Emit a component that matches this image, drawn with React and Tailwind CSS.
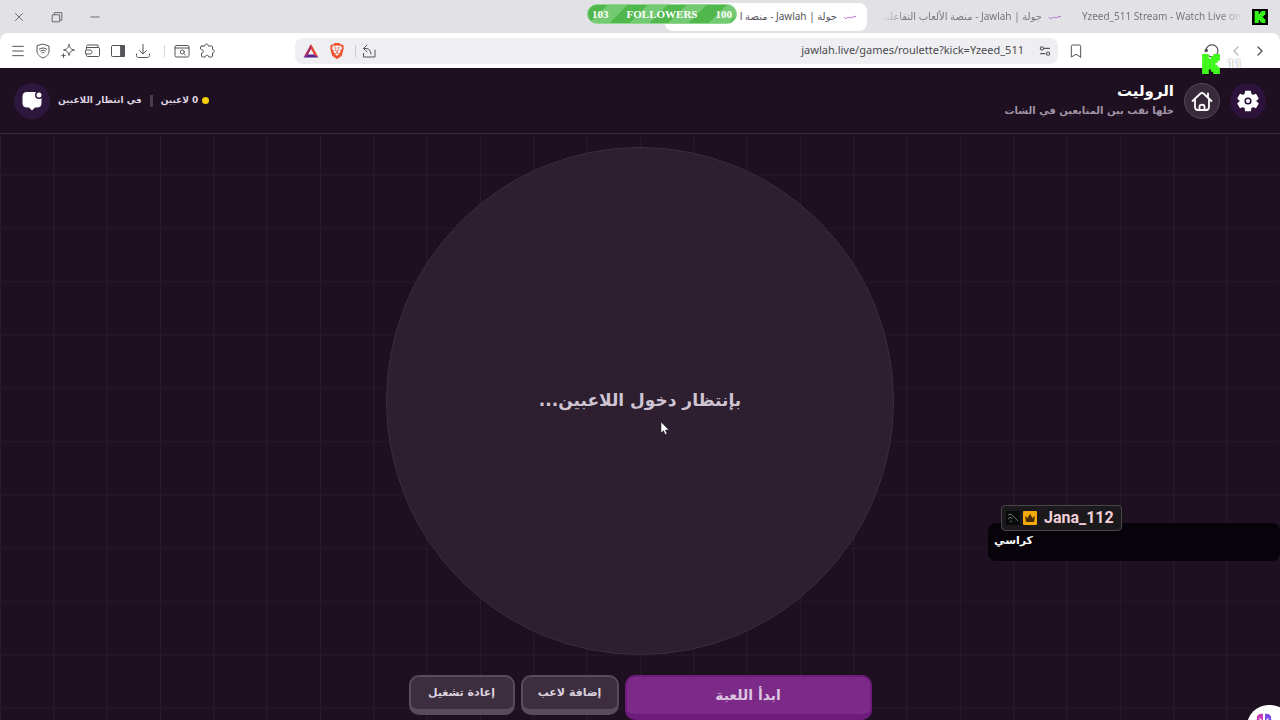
import React from 'react';
import { Menu, Bookmark, ChevronLeft, ChevronRight, X, Minus } from 'lucide-react';
import { SiKick, SiBrave } from 'react-icons/si';

const svgProps = {
  viewBox: '0 0 16 16',
  fill: 'none',
  stroke: 'currentColor',
  strokeWidth: 1,
  strokeLinecap: 'round',
  strokeLinejoin: 'round',
  className: 'w-4 h-4',
  'aria-hidden': true,
};

const ShieldIcon = () => (
  <svg {...svgProps}>
    <path d="M8 1.200 14 3v5c0 3.400-2.600 5.700-6 7-3.400-1.300-6-3.600-6-7V3z" />
    <path d="M4.300 6.200c2.200-1.700 5.200-1.700 7.400 0M5.500 8c1.500-1.100 3.500-1.100 5 0M6.800 9.700c.8-.5 1.600-.5 2.400 0" />
  </svg>
);

const SparkIcon = () => (
  <svg {...svgProps}>
    <path d="M9 1.500c.8 3.700 1.700 4.700 5.500 5.500-3.800.8-4.700 1.800-5.500 5.500C8.200 8.800 7.300 7.800 3.500 7 7.300 6.200 8.200 5.200 9 1.500z" />
    <path d="M3.500 10.800v3.600M1.700 12.600h3.600" />
  </svg>
);

const WalletIcon = () => (
  <svg {...svgProps}>
    <path d="M1.500 6V3.500C1.500 2.500 2.300 2 3 2h10v2.500M1.500 4.500h12c.6 0 1 .4 1 1v7c0 .6-.4 1-1 1h-11c-.6 0-1-.4-1-1v-1" />
    <path d="M1 7h4c2.700 0 2.700 4 0 4H1z" />
  </svg>
);

const PanelIcon = () => (
  <svg {...svgProps}>
    <rect x="1.500" y="2.500" width="13" height="11" rx="1" />
    <rect x="11" y="2.500" width="3.500" height="11" fill="currentColor" />
  </svg>
);

const DownloadIcon = () => (
  <svg {...svgProps}>
    <path d="M8 1.500v9M4.500 7.500 8 11l3.500-3.500M1.500 11v1.500c0 1.200.8 2 2 2h9c1.200 0 2-.8 2-2V11" />
  </svg>
);

const SearchTabIcon = () => (
  <svg {...svgProps}>
    <rect x="1" y="2.500" width="14" height="11.500" rx="1.500" />
    <path d="M1 5h14M9.800 10.600l1.500 1.500" />
    <circle cx="8.300" cy="9" r="2" />
  </svg>
);

const PuzzleIcon = () => (
  <svg {...svgProps}>
    <path d="M3 3h2.800c-.6-2.600 4-2.600 3.400 0H12.500c.6 0 1 .4 1 1v2.600c2.400-.2 2.400 3.600 0 3.400V13c0 .6-.4 1-1 1H9.700c.3-2.400-3.700-2.400-3.400 0H3.500c-.6 0-1-.4-1-1v-2.800C5 10 5 6.800 2.500 6.600L1.500 6V4c0-.6.600-1 1.500-1z" />
  </svg>
);

const ShareIcon = () => (
  <svg {...svgProps}>
    <path d="M6 2 2.500 5.500 6 9M2.500 5.500h2.500c3 0 5 2.500 5 5.500M2.500 10.500v3.500h11.500V7" />
  </svg>
);

const TuneIcon = () => (
  <svg {...svgProps} strokeWidth="1.300" className="w-3.5 h-3.5">
    <circle cx="4.500" cy="5" r="1.800" />
    <path d="M7.500 5H13M3 11h5" />
    <circle cx="11.500" cy="11" r="1.800" />
  </svg>
);

const ReloadIcon = () => (
  <svg {...svgProps} strokeWidth="1.200">
    <path d="M5 13a6 6 0 1 0-3-5.500" />
    <circle cx="2.200" cy="7.500" r="1.200" fill="currentColor" />
  </svg>
);

const BatIcon = () => (
  <svg viewBox="0 0 16 16" className="w-4 h-4" aria-hidden="true">
    <path d="M8 1 .5 14.500 5 11.500l3-5.500z" fill="#a3245f" />
    <path d="M8 1l7.500 13.500-4.500-3L8 6z" fill="#e8412f" />
    <path d="M.5 14.500h15l-4.500-3H5z" fill="#5b1e8c" />
  </svg>
);

const GearIcon = () => (
  <svg viewBox="0 0 24 24" className="w-6 h-6" aria-hidden="true">
    <path
      fill="#fff"
      stroke="#fff"
      strokeWidth="1.500"
      strokeLinejoin="round"
      d="M9.800 2.500h4.400l.6 3 2 1.100 2.900-1 2.200 3.800-2.300 2v1.200l2.300 2-2.200 3.800-2.900-1-2 1.100-.6 3H9.800l-.6-3-2-1.100-2.900 1-2.200-3.800 2.300-2v-1.200l-2.300-2 2.200-3.800 2.900 1 2-1.100z"
    />
    <circle cx="12" cy="12" r="2.800" fill="#fff" stroke="#2d123b" strokeWidth="1.600" />
  </svg>
);

const HomeIcon = () => (
  <svg viewBox="0 0 24 24" className="w-6 h-6" fill="none" stroke="#fff" strokeWidth="1.800" strokeLinecap="round" strokeLinejoin="round" aria-hidden="true">
    <path d="M2.500 12 10.500 4.500c1-.8 2-.8 3 0L21.500 12M18 8V4.500M5 10.500V18c0 2 1 3 3 3h8c2 0 3-1 3-3v-7.500" />
    <path d="M9.500 20.500V18c0-3 5-3 5 0v2.500" />
  </svg>
);

const ChatIcon = () => (
  <svg viewBox="0 0 24 24" className="w-6 h-6" aria-hidden="true">
    <path d="M7 3h10c3 0 4.500 1.500 4.500 4.500v6.500c0 3-1.500 4.500-4.500 4.500h-2L12 21.500 9 18.500H7C4 18.500 2.500 17 2.500 14V7.500C2.500 4.500 4 3 7 3z" fill="#fff" />
    <circle cx="19" cy="6" r="4" fill="#2d173d" />
    <circle cx="19" cy="6" r="2.500" fill="#fff" />
  </svg>
);

const tabTitle = 'جولة | Jawlah - منصة الألعاب التفاعلية';

const tools = [
  { label: 'الملحقات', icon: <PuzzleIcon /> },
  { label: 'بحث في علامات التبويب', icon: <SearchTabIcon /> },
  null,
  { label: 'التنزيلات', icon: <DownloadIcon /> },
  { label: 'الشريط الجانبي', icon: <PanelIcon /> },
  { label: 'المحفظة', icon: <WalletIcon /> },
  { label: 'المساعد', icon: <SparkIcon /> },
  { label: 'الحماية', icon: <ShieldIcon /> },
  { label: 'القائمة', icon: <Menu className="w-4 h-4" strokeWidth={1.5} /> },
];

function Favicon() {
  return (
    <svg viewBox="0 0 14 6" className="w-3.5 h-1.5 shrink-0" fill="none" stroke="#b56ad0" aria-hidden="true">
      <path d="M1 3c1 2 3 2 4 0 1 1 2 1 3 0 1 1 2 1 3-1l2 1" />
    </svg>
  );
}

function TabStrip() {
  return (
    <div className="h-[33px] flex items-center px-3 text-[10px] text-[#77767c] font-['Noto_Sans','DejaVu_Sans',sans-serif]">
      <div className="w-[186px] flex items-center gap-2 shrink-0" role="tab">
        <span className="w-4 h-4 bg-black flex items-center justify-center shrink-0">
          <SiKick className="w-3 h-3 text-[#35f516]" />
        </span>
        <span dir="ltr" className="w-[162px] overflow-hidden whitespace-nowrap mask-r-from-85%">Yzeed_511 Stream - Watch Live on Kick</span>
      </div>
      <div className="w-[215px] flex items-center gap-1.5 pr-5 shrink-0" role="tab">
        <Favicon />
        <span className="w-[160px] overflow-hidden whitespace-nowrap mask-l-from-85%">{tabTitle}</span>
      </div>
      <div className="w-[202px] h-7 flex items-center gap-1.5 px-2.5 shrink-0 rounded-lg bg-white text-[#55545a]" role="tab" aria-selected="true">
        <Favicon />
        <span className="w-[98px] overflow-hidden whitespace-nowrap">{tabTitle}</span>
      </div>
      <div className="flex-1" />
      <div className="flex items-center gap-6 text-[#5c5b60]">
        <button aria-label="تصغير"><Minus className="w-3.5 h-3.5" strokeWidth={1.5} /></button>
        <button aria-label="استعادة">
          <svg {...svgProps} className="w-3.5 h-3.5">
            <path d="M3 5.500h8v8H3zM5 5V3h8.500v8.500H11.500" />
          </svg>
        </button>
        <button aria-label="إغلاق"><X className="w-3.5 h-3.5" strokeWidth={1.5} /></button>
      </div>
    </div>
  );
}

function Toolbar() {
  return (
    <div className="h-[35px] flex items-center pr-3 pl-2.5 bg-white rounded-t-lg text-[#55545a]">
      <div className="flex items-center gap-2">
        <button aria-label="التالي"><ChevronRight className="w-4 h-4" strokeWidth={2} /></button>
        <button aria-label="السابق" className="text-[#b9b9bd]"><ChevronLeft className="w-4 h-4" strokeWidth={2} /></button>
        <button aria-label="تحديث"><ReloadIcon /></button>
      </div>
      <button aria-label="إشارة مرجعية" className="mr-30 shrink-0"><Bookmark className="w-4 h-4" strokeWidth={1.5} /></button>
      <div className="flex-1 min-w-0 mr-2.5 h-[26px] flex items-center gap-2.5 pr-1.5 pl-2 rounded-lg bg-[#efeff2]">
        <button aria-label="معلومات الموقع"><TuneIcon /></button>
        <input
          aria-label="العنوان"
          dir="ltr"
          readOnly
          value="jawlah.live/games/roulette?kick=Yzeed_511"
          className="flex-1 min-w-0 mr-1 bg-transparent text-right text-[11px] text-[#4c4b50] outline-none font-['Noto_Sans',sans-serif]"
        />
        <div className="flex items-center gap-[5px]">
          <button aria-label="مشاركة"><ShareIcon /></button>
          <span className="w-px h-3 bg-[#c9c9ce]" />
        </div>
        <button aria-label="Brave"><SiBrave className="w-4 h-4 text-[#f0512b]" /></button>
        <button aria-label="BAT"><BatIcon /></button>
      </div>
      <div className="mr-20 flex items-center gap-[9px]">
        {tools.map((tool, i) =>
          tool ? (
            <button key={tool.label} aria-label={tool.label}>{tool.icon}</button>
          ) : (
            <span key={i} className="w-px h-3 ml-1 bg-[#d5d5d9]" />
          )
        )}
      </div>
    </div>
  );
}

function GameHeader() {
  return (
    <header className="h-[66px] shrink-0 flex items-center justify-between px-3.5 border-b border-[#3a2a3d] bg-[#1f1021]">
      <div className="flex items-center gap-2.5">
        <button aria-label="الإعدادات" className="w-9 h-9 rounded-full bg-[#2d123b] flex items-center justify-center">
          <GearIcon />
        </button>
        <a href="#home" aria-label="الرئيسية" className="w-9 h-9 rounded-full border border-[#55465a] bg-[#382a3b] flex items-center justify-center">
          <HomeIcon />
        </a>
        <div>
          <h1 className="text-[15px] leading-5 font-bold text-white">الروليت</h1>
          <p className="text-[10px] leading-5 font-bold text-[#a195a5]">خلها تقب بين المتابعين في الشات</p>
        </div>
      </div>
      <div className="flex items-center gap-2 text-[9px] font-bold text-[#ddd3e0]">
        <span className="flex items-center gap-1">
          <span className="w-[7px] h-[7px] rounded-full bg-[#f5cf0b]" />
          0 لاعبين
        </span>
        <span className="w-[3px] h-3 bg-[#4a3b4e]" />
        <span>في انتظار اللاعبين</span>
        <button aria-label="المحادثة" className="w-9 h-9 rounded-full bg-[#2d173d] flex items-center justify-center">
          <ChatIcon />
        </button>
      </div>
    </header>
  );
}

function ChatMessage() {
  return (
    <div dir="ltr" className="absolute right-0 top-[505px] w-[292px]">
      <div className="relative z-10 w-fit ml-[13px] h-[26px] flex items-center gap-[3px] pl-1 pr-[7px] rounded border border-[#474747] bg-[#1b191b]">
        <svg viewBox="0 0 14 14" className="w-3.5 h-3.5" stroke="#63706b" fill="none" aria-hidden="true">
          <rect width="14" height="14" fill="#090b0b" stroke="none" />
          <path d="M2 4l3-1 3 3 4 4M2 8l3-2 1 2M4 11l2-1" />
        </svg>
        <svg viewBox="0 0 14 14" className="w-3.5 h-3.5" aria-hidden="true">
          <rect width="14" height="14" rx="1" fill="#f6a90a" />
          <path d="M2 5l2.500 2L7 3l2.500 4L12 5l-1 6H3z" fill="#4a2c05" />
        </svg>
        <span className="ml-1 text-[16px] font-bold text-[#f2cfda] font-['Roboto',sans-serif]">Jana_112</span>
      </div>
      <p className="-mt-2 h-[38px] px-1.5 pt-2 rounded-lg bg-[#08030a] text-[11px] leading-5 font-bold text-white">كراسي</p>
    </div>
  );
}

export default function App() {
  return (
    <div dir="rtl" className="relative h-screen overflow-hidden flex flex-col bg-[#e2e1e6] font-['DejaVu_Sans',sans-serif]">
      <TabStrip />
      <Toolbar />

      <div className="flex-1 min-h-0 flex flex-col bg-[#1f1021] bg-[linear-gradient(to_right,#2a1a2e_1px,transparent_1px),linear-gradient(to_bottom,#26162a_1px,transparent_1px)] bg-[size:calc(100vw/24)_calc(100vw/24)]">
        <GameHeader />
        <main className="flex-1 flex flex-col items-center pt-[13px]">
          <div className="w-[508px] max-w-full aspect-square shrink-0 rounded-full border border-[#3b2d3f] bg-[#2d1e30] flex items-center justify-center">
            <p className="text-[17px] font-bold text-[#cfc5d2]">بإنتظار دخول اللاعبين...</p>
          </div>
          <div className="mt-5 flex items-start gap-1.5">
            <button className="w-[247px] h-[45px] rounded-[10px] border-2 border-b-[6px] border-[#6d1c7c] bg-[#7c2a87] text-[14px] font-bold text-[#dcc3e0]">
              ابدأ اللعبة
            </button>
            <button className="w-[98px] h-10 rounded-[10px] border-2 border-b-[6px] border-[#5a4a5e] bg-[#3c2d3f] text-[11px] font-bold text-[#dcd3de]">
              إضافة لاعب
            </button>
            <button className="w-[106px] h-10 rounded-[10px] border-2 border-b-[6px] border-[#5a4a5e] bg-[#3c2d3f] text-[11px] font-bold text-[#dcd3de]">
              إعادة تشغيل
            </button>
          </div>
        </main>
      </div>

      {/* Stream overlays */}
      <div dir="ltr" className="absolute left-[587px] top-1 w-[150px] h-5 px-1 flex items-center justify-between rounded-full border border-[#8fd98e] bg-[repeating-linear-gradient(135deg,#4fb74c_0_14px,#74c973_14px_28px)] text-[11px] font-bold text-white font-['Liberation_Serif',serif]">
        <span>103</span>
        <span>FOLLOWERS</span>
        <span>100</span>
      </div>
      <div dir="ltr" className="absolute right-[38px] top-[54px] flex items-center gap-1.5">
        <SiKick className="w-5 h-5 text-[#41fb1c]" />
        <span className="text-[13px] leading-5 font-bold text-white font-['Roboto',sans-serif] text-shadow-[0_0_2px_#777]">11</span>
      </div>
      <ChatMessage />
      <button aria-label="المساعد الذكي" className="absolute -right-3 -bottom-7 w-[45px] h-[43px] rounded-full bg-white flex justify-end pl-2 pt-2">
        <svg viewBox="0 0 18 18" className="w-[18px] h-[18px]" aria-hidden="true">
          <path d="M8 1C4 0 1 3 2 6c-2 3-1 7 2 8 1 2 4 2 4 0z" fill="#c93bb4" />
          <path d="M10 1c4-1 7 2 6 5 2 3 1 7-2 8-1 2-4 2-4 0z" fill="#7a4be0" />
          <path d="M4 6h2v3M14 6h-2v3" stroke="#fff" fill="none" />
        </svg>
      </button>
      <svg viewBox="0 0 10 14" className="absolute left-[660px] top-[421px] w-2.5 h-3.5" aria-hidden="true">
        <path d="M1 1v11l2.500-2.300L5.200 13.500l1.800-.8-1.600-3.700H9z" fill="#fff" stroke="#1b1020" strokeWidth="0.500" />
      </svg>
    </div>
  );
}
